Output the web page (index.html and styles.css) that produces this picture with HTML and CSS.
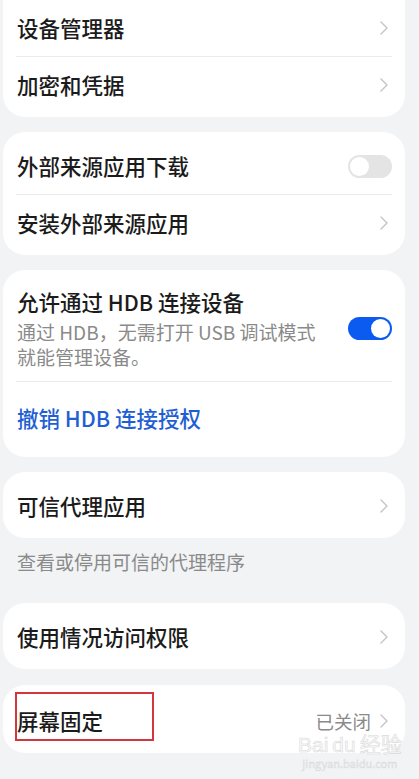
FILE: index.html
```html
<!DOCTYPE html>
<html lang="zh">
<head>
<meta charset="utf-8">
<link rel="stylesheet" href="styles.css">
</head>
<body>
<div class="page">
  <div class="card first">
    <div class="row"><span class="title">设备管理器</span><svg class="chev" viewBox="0 0 8 14"><path d="M1 1 L7 7 L1 13"/></svg></div>
    <div class="divider"></div>
    <div class="row"><span class="title">加密和凭据</span><svg class="chev" viewBox="0 0 8 14"><path d="M1 1 L7 7 L1 13"/></svg></div>
  </div>

  <div class="card">
    <div class="row"><span class="title">外部来源应用下载</span><span class="toggle off"><span class="knob"></span></span></div>
    <div class="divider"></div>
    <div class="row"><span class="title">安装外部来源应用</span><svg class="chev" viewBox="0 0 8 14"><path d="M1 1 L7 7 L1 13"/></svg></div>
  </div>

  <div class="card">
    <div class="row tall">
      <div class="texts">
        <span class="title">允许通过 HDB 连接设备</span>
        <span class="sub">通过 HDB，无需打开 USB 调试模式就能管理设备。</span>
      </div>
      <span class="toggle on"><span class="knob"></span></span>
    </div>
    <div class="divider"></div>
    <div class="row link"><span class="title blue">撤销 HDB 连接授权</span></div>
  </div>

  <div class="card">
    <div class="row"><span class="title">可信代理应用</span><svg class="chev" viewBox="0 0 8 14"><path d="M1 1 L7 7 L1 13"/></svg></div>
  </div>
  <p class="caption">查看或停用可信的代理程序</p>

  <div class="card">
    <div class="row"><span class="title">使用情况访问权限</span><svg class="chev" viewBox="0 0 8 14"><path d="M1 1 L7 7 L1 13"/></svg></div>
  </div>

  <div class="card marked">
    <div class="row"><span class="title">屏幕固定</span><span class="right"><span class="value">已关闭</span><svg class="chev" viewBox="0 0 8 14"><path d="M1 1 L7 7 L1 13"/></svg></span></div>
    <div class="redbox"></div>
  </div>
</div>
<div class="watermark">
  <span class="wm-logo">Bai<span class="wm-du">du</span>经验</span>
  <span class="wm-url">jingyan.baidu.com</span>
</div>
</body>
</html>
```

FILE: styles.css
```css
* { box-sizing: border-box; }
html, body {
  margin: 0;
  padding: 0;
  background: #f1f3f5;
  font-family: "Noto Sans CJK SC", "Noto Sans", sans-serif;
  overflow: hidden;
}
body { height: 779px; position: relative; }
.page {
  display: flex;
  flex-direction: column;
  gap: 15px;
  padding: 0 14px 0 3px;
  margin-top: -30px;
}
.card {
  background: #ffffff;
  border-radius: 22px;
  padding: 6px 0 4px;
  position: relative;
}
.card.first { padding-top: 30px; }
.card.marked { margin-top: 1px; padding-top: 8px; }
.row {
  display: flex;
  align-items: center;
  justify-content: space-between;
  min-height: 56px;
  padding: 0 13px 0 14px;
}
.row.tall { padding-top: 12px; padding-bottom: 12px; align-items: center; }
.row.link { min-height: 71px; }
.texts { display: flex; flex-direction: column; width: 312px; }
.title {
  font-size: 21.5px;
  line-height: 28px;
  font-weight: 500;
  color: #1b1b1b;
}
.blue { color: #1f5fd3; }
.sub {
  margin-top: 3px;
  font-size: 19px;
  line-height: 25px;
  color: #8a8a8a;
}
.divider {
  height: 1px;
  background: #ececec;
  margin: 0 13px 0 13px;
}
.chev {
  width: 8px;
  height: 14px;
  margin-right: 4px;
  fill: none;
  stroke: #c4c4c4;
  stroke-width: 1.4;
  stroke-linecap: round;
  stroke-linejoin: round;
  flex: none;
}
.right { display: flex; align-items: center; gap: 9px; }
.value { font-size: 18.5px; color: #8a8a8a; line-height: 24px; }
.toggle {
  width: 44px;
  height: 23px;
  border-radius: 12px;
  display: flex;
  align-items: center;
  padding: 2px;
  flex: none;
}
.toggle .knob {
  width: 19px;
  height: 19px;
  border-radius: 50%;
  background: #ffffff;
}
.toggle.off { background: #e4e4e4; justify-content: flex-start; }
.toggle.on { background: #0b5bf0; justify-content: flex-end; }
.caption {
  margin: 0;
  padding: 0 14px 17px;
  font-size: 19px;
  line-height: 18px;
  color: #8a8a8a;
}
.redbox {
  position: absolute;
  left: 12px;
  top: 7px;
  width: 139px;
  height: 49px;
  border: 2px solid #d3373d;
}
.watermark {
  position: absolute;
  left: 298px;
  top: 734px;
  display: flex;
  flex-direction: column;
  align-items: center;
  pointer-events: none;
}
.wm-logo {
  font-family: "Liberation Sans", "Noto Sans CJK SC", sans-serif;
  font-size: 21px;
  line-height: 22px;
  color: #fafafa;
  -webkit-text-stroke: 0.6px #dadada;
}
.wm-du { margin: 0 4px; }
.wm-url {
  font-size: 11px;
  line-height: 14px;
  color: #e6e6e6;
  -webkit-text-stroke: 0.3px #d8d8d8;
}
```
